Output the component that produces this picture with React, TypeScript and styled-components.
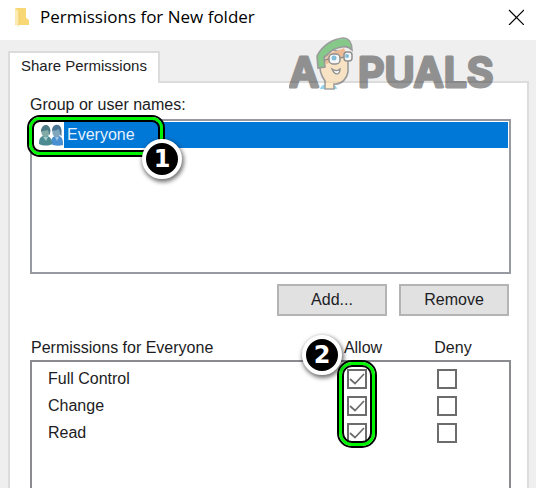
import React, { useState } from 'react';
import styled, { createGlobalStyle } from 'styled-components';

const GlobalStyle = createGlobalStyle`
  * { box-sizing: border-box; }
  body {
    margin: 0;
    overflow: hidden;
    background: #efefef;
    color: #1c1c24;
    font: 16px/20px "Liberation Sans", Arial, sans-serif;
  }
`;

const Dialog = styled.main`
  display: flex;
  flex-direction: column;
  height: 100vh;
  overflow: hidden;
`;

const TitleBar = styled.header`
  display: flex;
  align-items: center;
  flex: none;
  height: 40px;
  padding: 0 12px 6px 14px;
  gap: 10px;
  background: #fff;
  color: #000;
`;

const Title = styled.h1`
  flex: 1;
  margin: 0;
  font: 400 17px/24px "Open Sans", "Noto Sans", sans-serif;
`;

const CloseButton = styled.button`
  display: flex;
  padding: 0;
  border: 0;
  background: none;
`;

const Body = styled.section`
  display: flex;
  flex-direction: column;
  flex: 1;
  padding: 11px 7px 0 8px;
`;

const TabStrip = styled.div`
  position: relative;
  z-index: 1;
  display: flex;
  margin-bottom: -2px;
`;

const Tab = styled.button`
  height: 32px;
  padding: 0 11px 4px;
  border: 2px solid #dcdcdc;
  border-bottom: 0;
  background: #fff;
  color: inherit;
  font: 15px/20px "Liberation Sans", Arial, sans-serif;
`;

const Watermark = styled.div`
  position: absolute;
  right: 26px;
  top: -14px;
  opacity: 0.55;
  pointer-events: none;
`;

const Panel = styled.div`
  flex: 1;
  padding: 12px 16px 0 20px;
  border: 2px solid #dcdcdc;
  border-bottom: 0;
  background: #fff;
`;

const GroupLabel = styled.h2`
  margin: 0 0 4px;
  font: inherit;
`;

const NameList = styled.ul`
  height: 155px;
  margin: 0;
  padding: 1px;
  border: 2px solid #979aa0;
  list-style: none;
`;

const NameItem = styled.li`
  position: relative;
  display: flex;
  align-items: center;
  height: 26px;
  padding-left: 6px;
`;

const NameText = styled.span`
  flex: 1;
  margin-left: 1px;
  padding-left: 3px;
  background: #0078d7;
  color: #e4f1fc;
  line-height: 26px;
`;

const ButtonRow = styled.div`
  display: flex;
  justify-content: flex-end;
  gap: 12px;
  padding: 10px 2px 0 0;
`;

const PushButton = styled.button`
  width: 110px;
  height: 32px;
  padding: 0;
  border: 2px solid #b4b4b4;
  background: #e1e1e1;
  color: inherit;
  font: inherit;
`;

const PermissionTable = styled.table`
  width: 100%;
  margin-top: 21px;
  border-collapse: collapse;
  table-layout: fixed;
`;

const PermissionBody = styled.tbody`
  border: 2px solid #8a8b8e;
`;

const HeadCell = styled.th<{ $width?: number }>`
  width: ${({ $width }) => ($width ? `${$width}px` : 'auto')};
  height: 24px;
  padding: ${({ $width }) => ($width ? '0 0 2px 12px' : '0 0 2px')};
  font-weight: 400;
  text-align: ${({ $width }) => ($width ? 'center' : 'left')};
`;

const NameCell = styled.th`
  height: 27px;
  padding: 0 0 0 16px;
  font-weight: 400;
  text-align: left;
`;

const CheckCell = styled.td`
  position: relative;
  padding: 0;
`;

const SpacerCell = styled.td<{ $height: number }>`
  height: ${({ $height }) => $height}px;
  padding: 0;
`;

const EdgeCell = styled.td`
  width: 18px;
  padding: 0;
`;

const TickBox = styled.label`
  position: relative;
  display: block;
  width: 20px;
  height: 20px;
  margin: 0 auto;
`;

const TickInput = styled.input`
  display: block;
  width: 20px;
  height: 20px;
  margin: 0;
  appearance: none;
  border: 2px solid #6c6c6c;
  background: #fff;
`;

const TickMark = styled.svg`
  position: absolute;
  inset: 0;
  pointer-events: none;
`;

const Ring = styled.div<{ $around: 'name' | 'ticks' }>`
  position: absolute;
  z-index: 2;
  ${({ $around }) =>
    $around === 'name'
      ? 'left: -6px; top: -7px; width: 138px; height: 42px; border-radius: 13px;'
      : 'left: 25px; top: -5px; width: 40px; height: 88px; border-radius: 15px;'}
  border: 2px solid #000;
  pointer-events: none;

  &::before {
    content: '';
    position: absolute;
    inset: 0;
    border: 3px solid #00f500;
    border-radius: ${({ $around }) => ($around === 'name' ? 11 : 13)}px;
  }

  &::after {
    content: '';
    position: absolute;
    inset: 3px;
    border: 2px solid #000;
    border-radius: ${({ $around }) => ($around === 'name' ? 8 : 10)}px;
  }
`;

const StepBadge = styled.span<{ $step: 1 | 2 }>`
  position: absolute;
  z-index: 3;
  ${({ $step }) => ($step === 1 ? 'left: 109px; top: 17px;' : 'left: -10px; top: -30px;')}
  width: 40px;
  height: 40px;
  border: 4px solid #fff;
  border-radius: 50%;
  background: #000;
  box-shadow: 1px 2px 4px 1px rgba(0, 0, 0, 0.55);
  color: #fff;
  font: 700 24px/32px "DejaVu Sans", sans-serif;
  text-align: center;
`;

function FolderIcon() {
  return (
    <svg width="16" height="20" viewBox="0 0 16 20" aria-hidden="true">
      <path d="M1 1h11v10l3 2v5H1z" fill="#f8d775" />
      <path d="M1 1l4 4v15l-4-3z" fill="#fdeab0" />
      <path d="M5 5v13" stroke="#f0cc68" />
    </svg>
  );
}

function CloseIcon() {
  return (
    <svg width="16" height="16" viewBox="0 0 16 16" aria-hidden="true">
      <path d="M1 1l15 15M16 1L1 16" stroke="#000" strokeWidth="1.2" />
    </svg>
  );
}

function PeopleIcon() {
  return (
    <svg width="24" height="22" viewBox="0 0 24 22" aria-hidden="true">
      <path d="M12 20c0-5 1-7 4-8h4c3 1 4 3 4 9-4 1-9 1-12-1z" fill="#4a8fcf" />
      <ellipse cx="17.5" cy="7.5" rx="4.2" ry="5.5" fill="#7fa6bd" />
      <path d="M13 7c0-8 9-8 9.500-1v6c-2 0-1-5-3-7-2 2-4 1-6.500 2z" fill="#4a7593" />
      <path d="M16 13l2 4 2-4z" fill="#9fc5e4" />
      <path d="M0 20c0-5 1-7 4-8h4c4 1 5 4 5 8-3 2-9 2-13 0z" fill="#4b8b91" />
      <ellipse cx="6.5" cy="7.500" rx="4.200" ry="5.500" fill="#82aaa7" />
      <path d="M2 8c0-9 9-9 9.500-1l-1 4c-1-1 0-4-2-5-2 1-4 0-6.500 2z" fill="#4d7c87" />
      <path d="M4 13l3 4 2-4z" fill="#a2cccd" />
    </svg>
  );
}

function AppualsLogo() {
  return (
    <svg width="214" height="66" viewBox="0 0 214 66" role="img" aria-label="Appuals">
      <g
        fill="#444"
        stroke="#444"
        strokeWidth="3"
        strokeLinejoin="round"
        fontFamily="Inter, sans-serif"
        fontWeight="600"
        fontSize="41"
      >
        <text x="0" y="50">A</text>
        <text x="69" y="50">PUALS</text>
      </g>
      <path d="M31 52c2-5 5-5 7-3l9 0 1 3z" fill="#37b3e2" />
      <path
        d="M31 25c-1 8 2 15 5 19v8h9v-5c8 1 13-6 14-12V16L43 13z"
        fill="#ffd9a0"
        stroke="#555"
        strokeWidth="1.600"
      />
      <path d="M35 25l5-8 15-6 3 7-12 4-8 5z" fill="#ee9250" />
      <path
        d="M29 31l-1-12C33 9 43 2 54 1c6 0 9 5 9 12-3-3-6-4-10-3-7 1-11 3-15 8l-3 2 1 10z"
        fill="#2faa37"
        stroke="#555"
        strokeWidth="1.600"
      />
      <rect x="40" y="17" width="11" height="10" rx="4" fill="#fff" stroke="#444" strokeWidth="1.500" />
      <rect x="55" y="15" width="8" height="9" rx="3" fill="#fff" stroke="#444" strokeWidth="1.500" />
      <path d="M51 21l4-1M35 23l5-1" stroke="#444" strokeWidth="1.500" />
      <circle cx="45" cy="21" r="2.500" fill="#2d96c5" />
      <circle cx="58" cy="19" r="2" fill="#2d96c5" />
      <path d="M43 32c3 2 6 2 8 0 0 6-5 7-8 0z" fill="#fff" stroke="#444" strokeWidth="1.300" />
    </svg>
  );
}

interface PermissionCheckProps {
  label: string;
  initial: boolean;
}

function PermissionCheck({ label, initial }: PermissionCheckProps) {
  const [checked, setChecked] = useState(initial);
  return (
    <TickBox>
      <TickInput
        type="checkbox"
        aria-label={label}
        checked={checked}
        onChange={(event) => setChecked(event.target.checked)}
      />
      {checked && (
        <TickMark width="20" height="20" viewBox="0 0 20 20" aria-hidden="true">
          <path d="M3 10l5 4.500L17 5" fill="none" stroke="#6c6c6c" strokeWidth="1.700" />
        </TickMark>
      )}
    </TickBox>
  );
}

const permissions = ['Full Control', 'Change', 'Read'];

export default function App() {
  return (
    <>
      <GlobalStyle />
      <Dialog>
        <TitleBar>
          <FolderIcon />
          <Title>Permissions for New folder</Title>
          <CloseButton aria-label="Close">
            <CloseIcon />
          </CloseButton>
        </TitleBar>
        <Body>
          <TabStrip>
            <Tab>Share Permissions</Tab>
            <Watermark>
              <AppualsLogo />
            </Watermark>
          </TabStrip>
          <Panel>
            <GroupLabel>Group or user names:</GroupLabel>
            <NameList aria-label="Group or user names">
              <NameItem>
                <PeopleIcon />
                <NameText>Everyone</NameText>
                <Ring $around="name" />
                <StepBadge $step={1}>1</StepBadge>
              </NameItem>
            </NameList>
            <ButtonRow>
              <PushButton>Add...</PushButton>
              <PushButton>Remove</PushButton>
            </ButtonRow>
            <PermissionTable>
              <thead>
                <tr>
                  <HeadCell scope="col">Permissions for Everyone</HeadCell>
                  <HeadCell scope="col" $width={90}>Allow</HeadCell>
                  <HeadCell scope="col" $width={90}>Deny</HeadCell>
                  <EdgeCell />
                </tr>
              </thead>
              <PermissionBody>
                <tr>
                  <SpacerCell colSpan={4} $height={4} />
                </tr>
                {permissions.map((name, index) => (
                  <tr key={name}>
                    <NameCell scope="row">{name}</NameCell>
                    <CheckCell>
                      <PermissionCheck label={`Allow ${name}`} initial />
                      {index === 0 && (
                        <>
                          <Ring $around="ticks" />
                          <StepBadge $step={2}>2</StepBadge>
                        </>
                      )}
                    </CheckCell>
                    <CheckCell>
                      <PermissionCheck label={`Deny ${name}`} initial={false} />
                    </CheckCell>
                    <EdgeCell />
                  </tr>
                ))}
                <tr>
                  <SpacerCell colSpan={4} $height={80} />
                </tr>
              </PermissionBody>
            </PermissionTable>
          </Panel>
        </Body>
      </Dialog>
    </>
  );
}
